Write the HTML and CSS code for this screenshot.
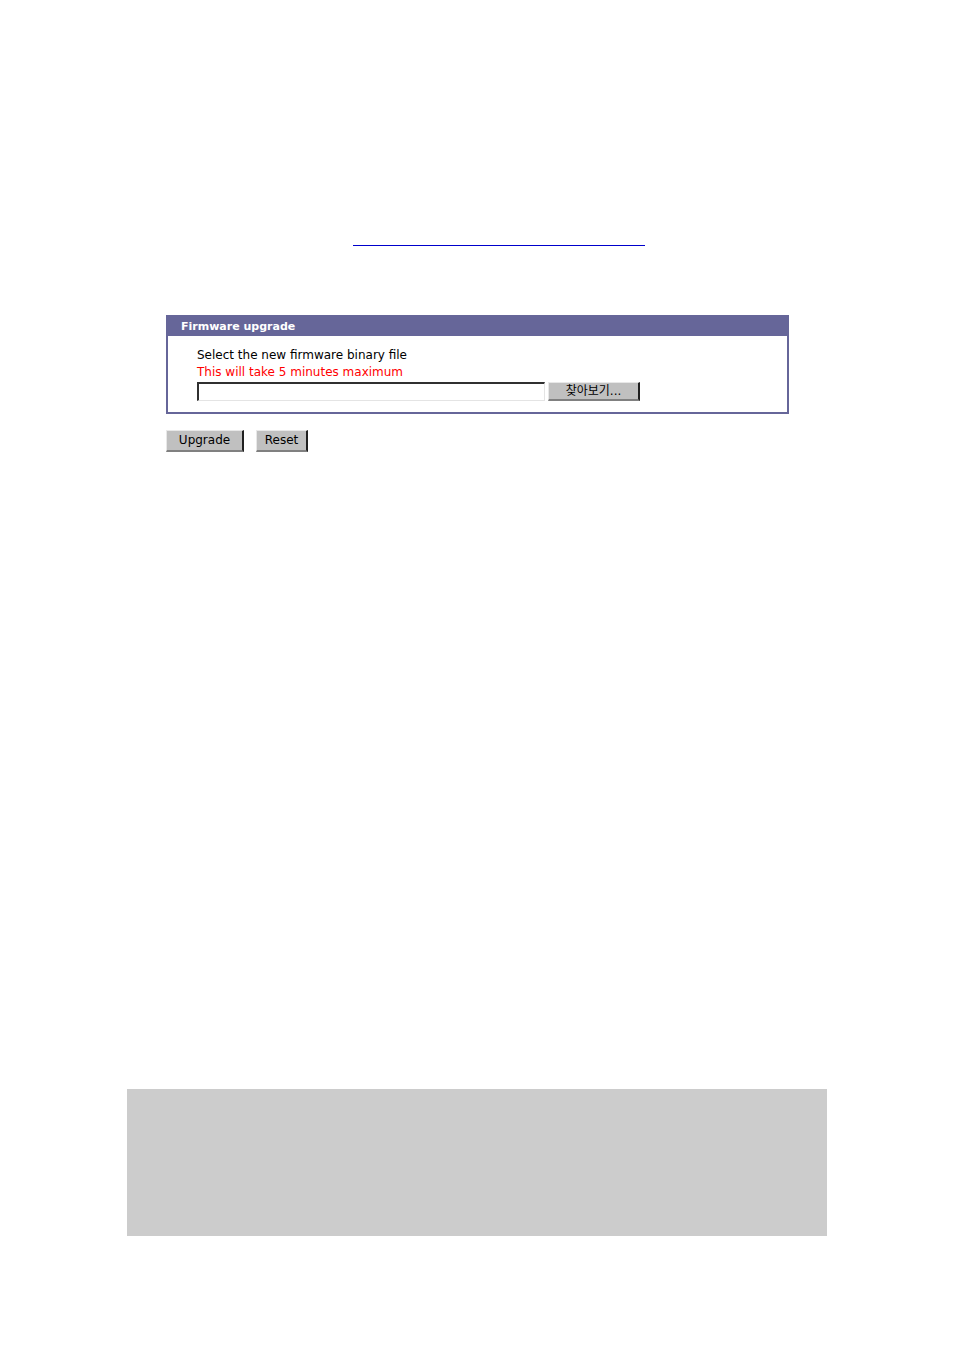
FILE: index.html
```html
<!DOCTYPE html>
<html>
<head>
<meta charset="utf-8">
<link rel="stylesheet" href="styles.css">
</head>
<body>
<div class="page">
  <div class="rule"></div>
  <div class="panel">
    <div class="panel-head">Firmware upgrade</div>
    <div class="panel-body">
      <div class="line">Select the new firmware binary file</div>
      <div class="line warn">This will take 5 minutes maximum</div>
      <div class="file-row">
        <input class="file-input" type="text" value="">
        <button class="btn browse" type="button">찾아보기...</button>
      </div>
    </div>
  </div>
  <div class="actions">
    <button class="btn upgrade" type="button">Upgrade</button>
    <button class="btn reset" type="button">Reset</button>
  </div>
  <div class="footer-box"></div>
</div>
</body>
</html>
```
FILE: styles.css
```css
html, body {
  margin: 0;
  padding: 0;
  background: #ffffff;
}
body {
  font-family: "DejaVu Sans", "Noto Sans CJK KR", sans-serif;
  font-size: 12px;
  color: #000000;
}
.page {
  width: 700px;
  margin: 0 auto;
  padding-top: 245px;
  padding-bottom: 115px;
}
.rule {
  margin-left: 226px;
  width: 292px;
  height: 1px;
  background: #0000cc;
}
.panel {
  margin-top: 69px;
  margin-left: 39px;
  width: 623px;
  box-sizing: border-box;
  border: 2px solid #666699;
}
.panel-head {
  height: 19px;
  line-height: 20px;
  background: #666699;
  color: #ffffff;
  font-weight: bold;
  font-size: 11px;
  padding-left: 13px;
}
.panel-body {
  padding: 11px 0 11px 29px;
}
.line {
  height: 17px;
  line-height: 17px;
}
.warn {
  color: #ff0000;
}
.file-row {
  margin-top: 1px;
  display: flex;
  gap: 3px;
  height: 19px;
}
.file-input {
  margin: 0;
  width: 348px;
  height: 19px;
  box-sizing: border-box;
  border-style: solid;
  border-width: 2px 1px 1px 2px;
  border-color: #303030 #e4e4e4 #e4e4e4 #303030;
  background: #ffffff;
  padding: 0 2px;
  font-family: inherit;
  font-size: 12px;
  outline: none;
}
.btn {
  margin: 0;
  padding: 0;
  box-sizing: border-box;
  appearance: none;
  -webkit-appearance: none;
  background: #c0c0c0;
  border-style: solid;
  border-width: 1px 2px 2px 1px;
  border-color: #e8e8e8 #202020 #808080 #e8e8e8;
  font-family: "DejaVu Sans", "Noto Sans CJK KR", sans-serif;
  font-size: 12px;
  color: #000000;
  text-align: center;
  cursor: default;
}
.browse {
  width: 92px;
  height: 19px;
  line-height: 15px;
}
.actions {
  margin-top: 16px;
  margin-left: 39px;
  display: flex;
  gap: 12px;
}
.upgrade {
  width: 78px;
  height: 22px;
  line-height: 17px;
}
.reset {
  width: 52px;
  height: 22px;
  line-height: 17px;
}
.footer-box {
  margin-top: 637px;
  height: 147px;
  background: #cccccc;
}
```
